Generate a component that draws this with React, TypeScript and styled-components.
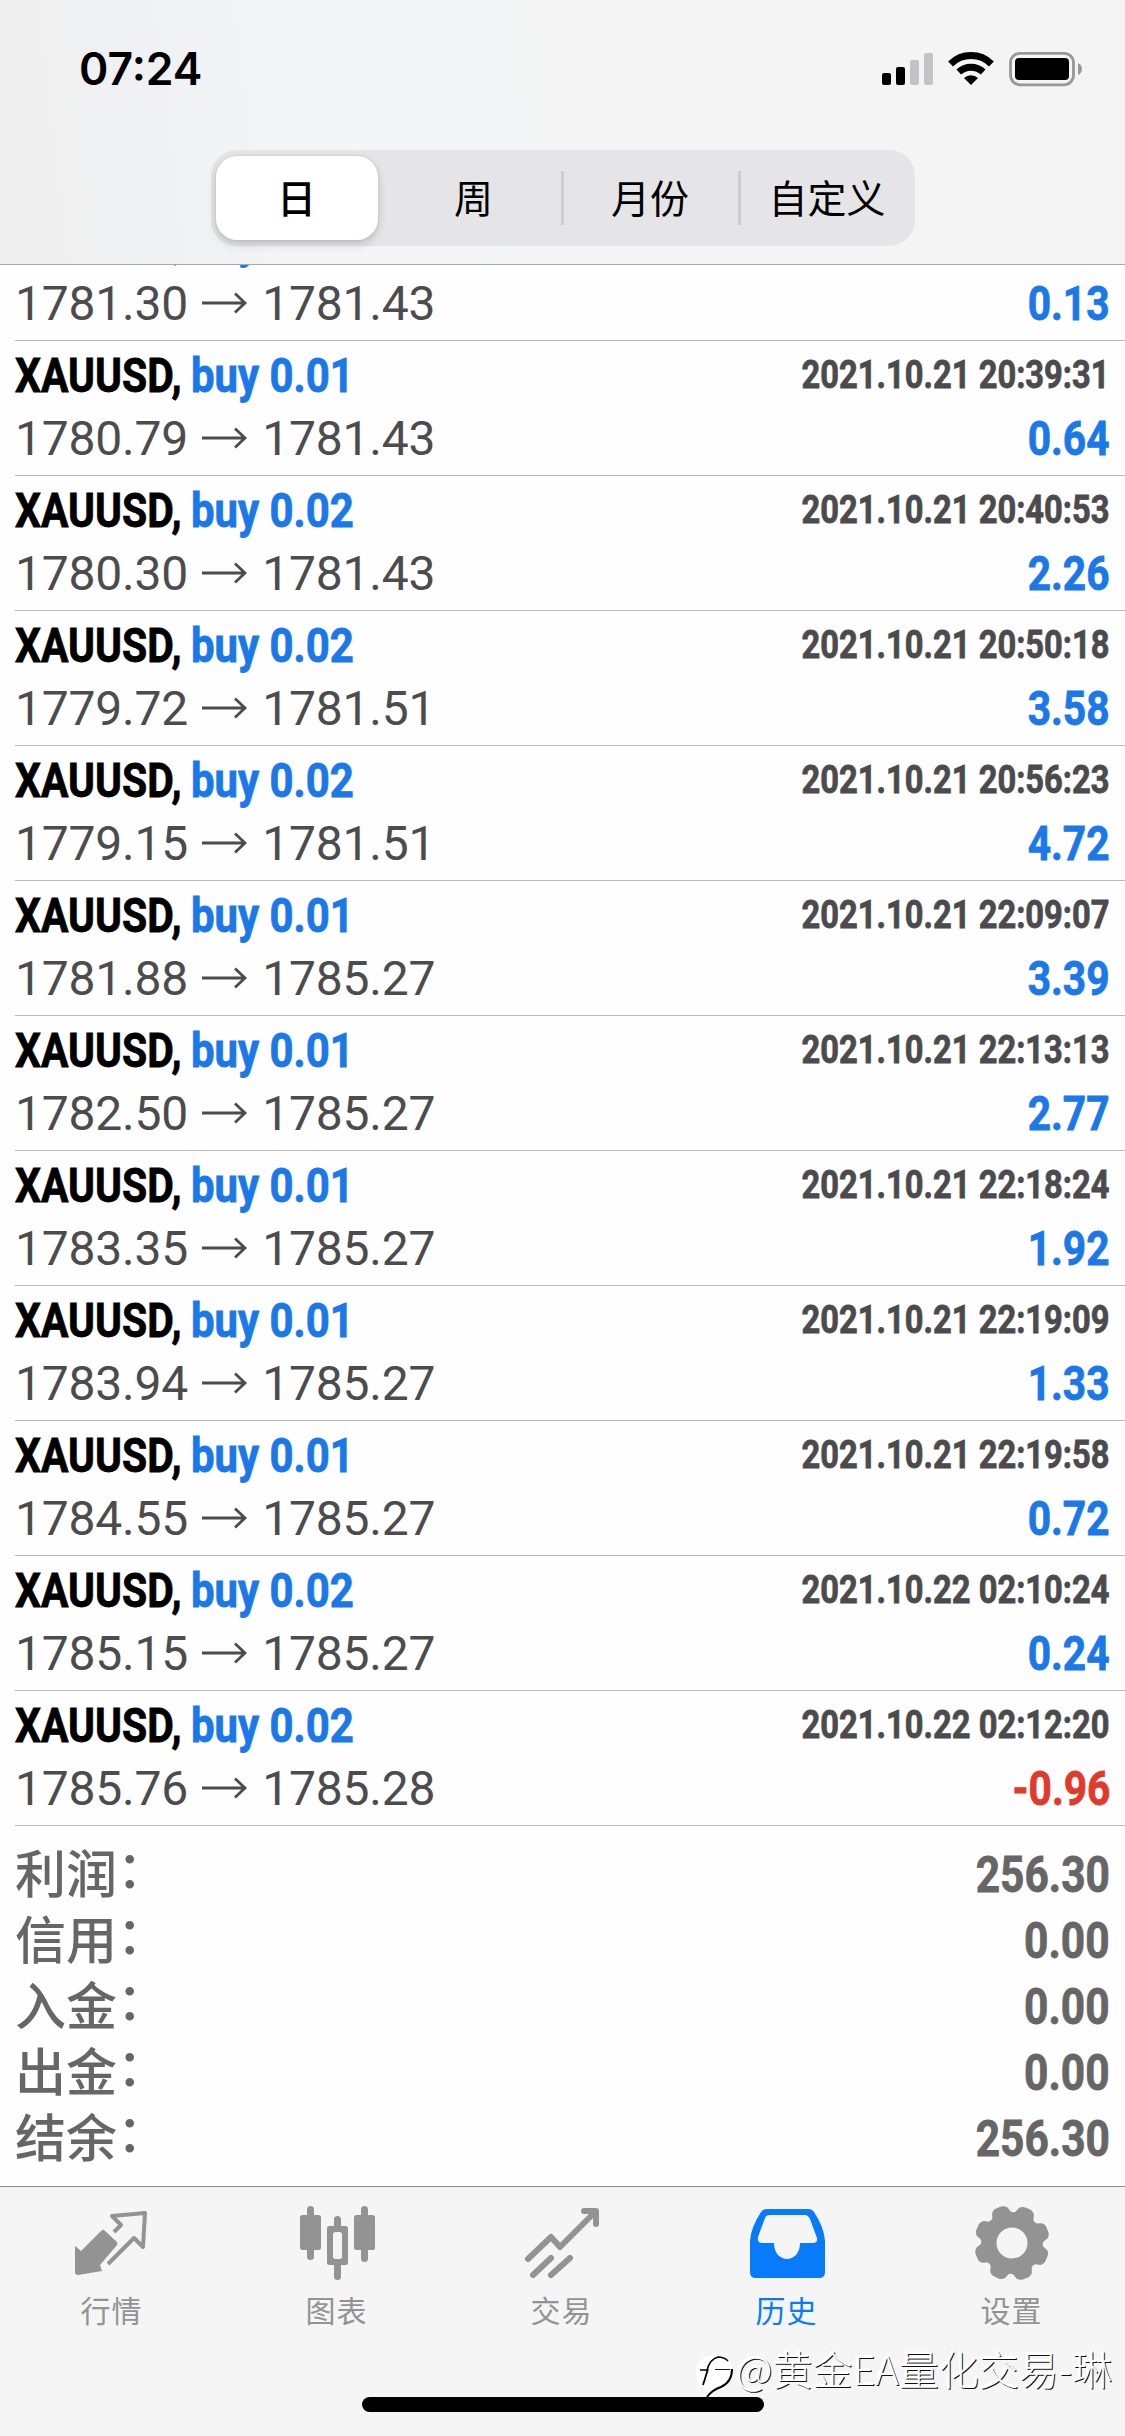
import React from 'react';
import styled, { createGlobalStyle, css } from 'styled-components';

const sans = 'Roboto, "Noto Sans CJK SC", Arial, sans-serif';
const cjk = '"Noto Sans CJK SC", "Liberation Sans", sans-serif';
const blue = '#1a78e8';

const GlobalStyle = createGlobalStyle`
  body { margin: 0; background: #fff; }
  * { box-sizing: border-box; }
`;

const Screen = styled.div`
  width: 1125px;
  height: 2436px;
  display: flex;
  flex-direction: column;
  overflow: hidden;
  position: relative;
  background: #fefefe;
  font-family: ${sans};
`;

const Header = styled.header`
  flex: none;
  height: 265px;
  display: flex;
  flex-direction: column;
  align-items: center;
  border-bottom: 1px solid #a9a9ab;
  background: linear-gradient(83deg, #eeeeee 0%, #f1f2f4 18%, #f4f5f7 32%, #f5f5f5 60%, #f5f4f5 100%);
`;

const StatusBar = styled.div`
  width: 100%;
  height: 150px;
  padding: 45px 43px 0 79px;
  display: flex;
  justify-content: space-between;
  align-items: flex-start;
`;

const Clock = styled.div`
  font: 600 44.5px/48px Inter, sans-serif;
  color: #000;
`;

const StatusIcons = styled.svg`
  display: block;
  margin-top: 5px;
`;

const Segments = styled.nav`
  width: 704px;
  height: 96px;
  padding: 6px 0 6px 5px;
  border-radius: 26px;
  background: #e5e5e7;
  display: grid;
  grid-template-columns: 169px 176px 177px 1fr;
`;

const Segment = styled.button<{ $active?: boolean; $divided?: boolean }>`
  border: 0;
  padding: 0 0 4px 2px;
  background: none;
  display: flex;
  align-items: center;
  justify-content: center;
  font: 400 39px/58px ${cjk};
  color: #000;
  ${p => p.$divided && css`
    background: linear-gradient(#cdcdd0, #cdcdd0) left center / 3px 54px no-repeat;
  `}
  ${p => p.$active && css`
    width: 162px;
    padding-left: 0;
    font-weight: 500;
    background: #fff;
    border-radius: 21px;
    box-shadow: 0 4px 10px rgba(0, 0, 0, 0.17), 0 0 3px rgba(0, 0, 0, 0.1);
  `}
`;

const History = styled.main`
  flex: none;
  height: 1921px;
  overflow: hidden;
  display: flex;
  flex-direction: column;
`;

const Deals = styled.ul`
  margin: -59px 0 0;
  padding: 0 0 0 15px;
  list-style: none;
`;

const Deal = styled.li`
  height: 135px;
  padding: 5px 15px 0 0;
  border-bottom: 1px solid #b9b9bb;
`;

const Line = styled.div`
  height: 60px;
  display: flex;
  justify-content: space-between;
  align-items: flex-start;
  line-height: 60px;
  white-space: nowrap;
`;

const PriceLine = styled(Line)`
  height: 65px;
  line-height: 65px;
`;

const Title = styled.div`
  display: flex;
  align-items: baseline;
`;

const Condensed = styled.span<{ $size: number; $scale: number; $width?: number; $line?: number; $color: string; $right?: boolean }>`
  display: block;
  flex: none;
  width: ${p => (p.$width ? `${p.$width}px` : 'auto')};
  font-weight: 700;
  font-size: ${p => p.$size}px;
  line-height: ${p => (p.$line ? `${p.$line}px` : 'inherit')};
  color: ${p => p.$color};
  -webkit-text-stroke: 0.8px ${p => p.$color};
  transform: scaleX(${p => p.$scale});
  transform-origin: ${p => (p.$right ? 'right' : 'left')} center;
`;

const Prices = styled.span`
  font-size: 48px;
  letter-spacing: -0.2px;
  color: #4c4c4e;
`;

const Arrow = styled.svg`
  display: inline-block;
  width: 48px;
  height: 24px;
  margin: 0 13px 0 13px;
  vertical-align: 5px;
`;

const Summary = styled.dl`
  margin: 0;
  padding: 15px 15px 0 15px;
`;

const SummaryRow = styled.div`
  height: 66px;
  display: flex;
  justify-content: space-between;
  align-items: flex-start;
`;

const Label = styled.dt`
  display: flex;
  font: 500 51px/61px ${cjk};
  color: #666;
`;

const Colon = styled.span`
  line-height: 51px;
`;

const Value = styled.dd`
  margin: 0;
  line-height: 68px;
`;

const TabBar = styled.nav`
  flex: none;
  height: 250px;
  border-top: 1px solid #8b8b8b;
  background: #f5f5f5;
  display: grid;
  grid-template-columns: repeat(5, 225px);
`;

const Tab = styled.a<{ $active?: boolean }>`
  display: flex;
  flex-direction: column;
  align-items: center;
  padding: 13px 2px 0 0;
  color: ${p => (p.$active ? '#087bfb' : '#939393')};
`;

const TabIcon = styled.svg`
  width: 84px;
  height: 84px;
  display: block;
`;

const TabLabel = styled.span`
  font: 400 30px/40px ${cjk};
  letter-spacing: 1px;
  margin-top: 5px;
`;

const HomeIndicator = styled.div`
  position: absolute;
  left: 362px;
  top: 2397px;
  width: 402px;
  height: 15px;
  border-radius: 8px;
  background: #000;
`;

const Watermark = styled.div`
  position: absolute;
  left: 692px;
  top: 2344px;
  display: flex;
  align-items: flex-start;
  font: 300 40px/48px ${cjk};
  color: #fff;
  text-shadow: 1px 1px 0 #111, -1px -1px 0 #fff;
  white-space: nowrap;
`;

const WatermarkLogo = styled.svg`
  width: 44px;
  height: 58px;
`;

const deals = [
  ['0.01', '2021.10.21 20:38:24', '1781.30', '1781.43', '0.13'],
  ['0.01', '2021.10.21 20:39:31', '1780.79', '1781.43', '0.64'],
  ['0.02', '2021.10.21 20:40:53', '1780.30', '1781.43', '2.26'],
  ['0.02', '2021.10.21 20:50:18', '1779.72', '1781.51', '3.58'],
  ['0.02', '2021.10.21 20:56:23', '1779.15', '1781.51', '4.72'],
  ['0.01', '2021.10.21 22:09:07', '1781.88', '1785.27', '3.39'],
  ['0.01', '2021.10.21 22:13:13', '1782.50', '1785.27', '2.77'],
  ['0.01', '2021.10.21 22:18:24', '1783.35', '1785.27', '1.92'],
  ['0.01', '2021.10.21 22:19:09', '1783.94', '1785.27', '1.33'],
  ['0.01', '2021.10.21 22:19:58', '1784.55', '1785.27', '0.72'],
  ['0.02', '2021.10.22 02:10:24', '1785.15', '1785.27', '0.24'],
  ['0.02', '2021.10.22 02:12:20', '1785.76', '1785.28', '-0.96'],
];

const totals = [
  ['利润', '256.30'],
  ['信用', '0.00'],
  ['入金', '0.00'],
  ['出金', '0.00'],
  ['结余', '256.30'],
];

const gear = (() => {
  const teeth = 8;
  const pts: string[] = [];
  for (let i = 0; i < teeth; i++) {
    const base = (i * 360) / teeth + 22.5 + 2;
    const at = (deg: number, r: number) => {
      const a = ((base + deg) * Math.PI) / 180;
      return `${(42 + r * Math.sin(a)).toFixed(2)} ${(43 - r * Math.cos(a)).toFixed(2)}`;
    };
    pts.push(`${i ? 'L' : 'M'}${at(-18, 31.5)} L${at(-13, 36)} Q${at(-7, 39)} ${at(0, 37.8)} Q${at(7, 39)} ${at(13, 36)} L${at(18, 31.5)} Q${at(22.5, 30)} ${at(27, 31.5)}`);
  }
  return pts.join(' ') + 'Z';
})();

const tabs = [
  {
    label: '行情',
    icon: (
      <>
        <path d="M34 30 L47 42 Q48 44 47 45 L30 65 L32 71 L8 75 Q5 75 5 72 L5 46 L11 51 L31 31 Q33 29 34 30Z" fill="currentColor" />
        <path d="M44 32 L51 25 L42 16 L75 13 L73 47 L64 38 L38 64" fill="none" stroke="currentColor" strokeWidth="4" strokeLinejoin="round" />
      </>
    ),
  },
  {
    label: '图表',
    icon: (
      <g fill="currentColor">
        <rect x="12" y="6" width="7" height="54" rx="3.5" />
        <rect x="5" y="15" width="21" height="35" rx="2.5" />
        <rect x="39" y="16" width="7" height="64" rx="3.5" />
        <rect x="32" y="26" width="21" height="39" rx="2.5" />
        <rect x="38" y="32" width="9" height="27" rx="2.5" fill="#f5f5f5" />
        <rect x="66" y="6" width="7" height="56" rx="3.5" />
        <rect x="59" y="15" width="21" height="35" rx="2.5" />
      </g>
    ),
  },
  {
    label: '交易',
    icon: (
      <g fill="none" stroke="currentColor" strokeWidth="6" strokeLinecap="round" strokeLinejoin="round">
        <path d="M8 59 L31 37 L40 47 L75 12" />
        <path d="M64 11 H76 V24" />
        <path d="M13 75 L31 58 M31 75 L50 58" />
      </g>
    ),
  },
  {
    label: '历史',
    active: true,
    icon: (
      <path
        fill="currentColor"
        fillRule="evenodd"
        d="M22 9 H63 Q67 9 69 12 Q79 27 80 41 V72 Q80 78 74 78 H11 Q5 78 5 72 V41 Q6 27 16 12 Q18 9 22 9Z M25 15 Q21 15 20 18 L13 37 Q12 43 17 43 H29 C29 54 36 59 42 59 S55 54 55 43 H68 Q73 43 72 38 L65 19 Q63 15 60 15Z"
      />
    ),
  },
  {
    label: '设置',
    icon: <path fill="currentColor" fillRule="evenodd" d={`${gear} M42 27.5a15.5 15.5 0 1 0 0 31a15.5 15.5 0 1 0 0 -31Z`} />,
  },
];

export default function App() {
  return (
    <Screen>
      <GlobalStyle />
      <Header>
        <StatusBar>
          <Clock>07:24</Clock>
          <StatusIcons width="202" height="38" viewBox="880 50 202 38">
            <rect x="882" y="73" width="9" height="12" rx="2" />
            <rect x="896" y="67" width="9" height="18" rx="2" />
            <rect x="910" y="60" width="9" height="25" rx="2" fill="#c3c3c5" />
            <rect x="924" y="53" width="9" height="32" rx="2" fill="#c3c3c5" />
            <g fill="none" stroke="#000" strokeWidth="7">
              <path d="M950.6 64 A29 29 0 0 1 991.4 64" />
              <path d="M958.8 72 A18 18 0 0 1 983.2 72" />
            </g>
            <path d="M964 78 A10 10 0 0 1 978 78 L971 85Z" />
            <rect x="1010.5" y="53.3" width="63" height="31.5" rx="9.5" fill="none" stroke="#98989a" strokeWidth="2.8" />
            <rect x="1015" y="58" width="54" height="22" rx="4" />
            <path d="M1078 63 Q1082 65 1082 69 T1078 75Z" fill="#98989a" />
          </StatusIcons>
        </StatusBar>
        <Segments>
          <Segment $active>日</Segment>
          <Segment>周</Segment>
          <Segment $divided>月份</Segment>
          <Segment $divided>自定义</Segment>
        </Segments>
      </Header>

      <History>
        <Deals>
          {deals.map(([lots, time, open, close, profit]) => (
            <Deal key={time}>
              <Line>
                <Title>
                  <Condensed $size={48} $scale={0.852} $width={176} $color="#000">XAUUSD,</Condensed>
                  <Condensed $size={48} $scale={0.873} $color={blue}>{`buy ${lots}`}</Condensed>
                </Title>
                <Condensed $size={39} $scale={0.838} $line={58} $color="#4b4b4e" $right>{time}</Condensed>
              </Line>
              <PriceLine>
                <Prices>
                  {open}
                  <Arrow viewBox="0 0 48 24" fill="none" stroke="currentColor" strokeWidth="2.8">
                    <path d="M1 12 H44 M34 2.5 L44 12 L34 21.5" />
                  </Arrow>
                  {close}
                </Prices>
                <Condensed $size={48} $scale={0.848} $color={profit.startsWith('-') ? '#e03a2c' : blue} $right>
                  {profit}
                </Condensed>
              </PriceLine>
            </Deal>
          ))}
        </Deals>
        <Summary>
          {totals.map(([label, value]) => (
            <SummaryRow key={label}>
              <Label>{label}<Colon>：</Colon></Label>
              <Value>
                <Condensed $size={50} $scale={0.85} $color="#666" $right>{value}</Condensed>
              </Value>
            </SummaryRow>
          ))}
        </Summary>
      </History>

      <TabBar>
        {tabs.map(tab => (
          <Tab key={tab.label} $active={tab.active}>
            <TabIcon viewBox="0 0 84 84">{tab.icon}</TabIcon>
            <TabLabel>{tab.label}</TabLabel>
          </Tab>
        ))}
      </TabBar>
      <HomeIndicator />
      <Watermark>
        <WatermarkLogo viewBox="2 0 44 58">
          <path d="M25 11 C37 11 43 20 42 29 C42 40 34 46 26 47 L18 53 L18 47 C9 45 6 38 6 29 C6 18 14 11 25 11Z" fill="#fff" />
          <g fill="none" stroke="#000">
            <path d="M10 26 H17 Q20 15 28 13 Q34 13 38 17" strokeWidth="1.5" />
            <path d="M18 25 L13 41" strokeWidth="1.8" />
            <path d="M25 25.5 H40" strokeWidth="0.9" />
            <path d="M42 25 Q42 38 31 43 Q22 46 17 53" strokeWidth="2" />
          </g>
        </WatermarkLogo>
        @黄金EA量化交易-琳
      </Watermark>
    </Screen>
  );
}
